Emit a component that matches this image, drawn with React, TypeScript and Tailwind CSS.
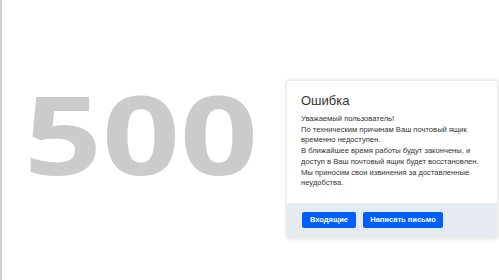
export default function App() {
  return (
    <div className="h-[280px] w-[499px] overflow-hidden bg-white border-l-2 border-[#cfcfcf] flex items-start font-['Liberation_Sans',Arial,sans-serif]">
      {/* код ошибки */}
      <div className="w-[284px] shrink-0 pt-[77px] pl-[22px]">
        <div className="origin-left scale-x-[1.24] font-['Open_Sans',sans-serif] font-bold text-[110px] leading-none text-[#cbcbcb]">
          500
        </div>
      </div>

      {/* карточка */}
      <div className="mt-[80px] w-[212px] shrink-0 bg-white rounded-[3px] shadow-[0_0_3px_rgba(0,0,0,0.15)] border border-[#ececec] overflow-hidden">
        <div className="px-[14px] pt-[12px] pb-[14px]">
          <h1 className="text-[13px] leading-[16px] text-[#333] mb-[5px]">Ошибка</h1>
          <p className="text-[7.6px] leading-[10.7px] text-[#333]">
            Уважаемый пользователь!
            <br />
            По техническим причинам Ваш почтовый ящик временно недоступен.
            <br />
            В ближайшее время работы будут закончены, и доступ в Ваш почтовый ящик будет восстановлен.
            <br />
            Мы приносим свои извинения за доставленные неудобства.
          </p>
        </div>
        <div className="bg-[#e6ebf1] px-[15px] pt-[9px] pb-[10px] flex gap-[7px]">
          <button className="h-[16px] w-[54px] bg-[#005ff9] rounded-[2px] text-white text-[7.5px] font-bold">
            Входящие
          </button>
          <button className="h-[16px] w-[80px] bg-[#005ff9] rounded-[2px] text-white text-[7.5px] font-bold">
            Написать письмо
          </button>
        </div>
      </div>
    </div>
  );
}
